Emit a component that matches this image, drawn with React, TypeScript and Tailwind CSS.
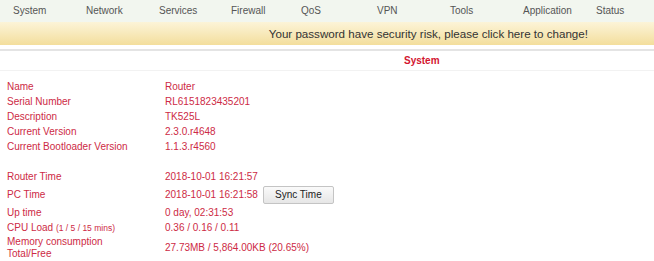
import React from "react";

const nav = [
  { t: "System", w: 73 },
  { t: "Network", w: 73 },
  { t: "Services", w: 72 },
  { t: "Firewall", w: 70 },
  { t: "QoS", w: 76 },
  { t: "VPN", w: 73 },
  { t: "Tools", w: 73 },
  { t: "Application", w: 73 },
  { t: "Status", w: 50 },
];

const group1 = [
  ["Name", "Router"],
  ["Serial Number", "RL6151823435201"],
  ["Description", "TK525L"],
  ["Current Version", "2.3.0.r4648"],
  ["Current Bootloader Version", "1.1.3.r4560"],
];

export default function App() {
  return (
    <div
      className="w-[654px] h-[261px] overflow-hidden bg-white text-[10px] leading-none"
      style={{ fontFamily: '"Liberation Sans", Arial, sans-serif' }}
    >
      <div className="h-[22px] bg-[#f2f6ef] flex items-center pl-[13px] text-[#555]">
        {nav.map((n) => (
          <div key={n.t} className="shrink-0" style={{ width: n.w }}>
            {n.t}
          </div>
        ))}
      </div>
      <div className="h-[23px] bg-gradient-to-b from-[#fcf4d8] to-[#f3de9c] flex items-center justify-end pr-[66px] text-[11.6px] text-[#333]">
        Your password have security risk, please click here to change!
      </div>
      <div className="h-[4px]" />
      <div className="h-[2px] bg-[#e4e4e4]" />
      <div className="h-[20px] flex items-center pl-[404px] font-bold text-[#d3152f] border-b border-[#f2f2f2]">
        System
      </div>
      <div className="h-[8px]" />
      <div className="text-[#cd2a45]">
        {group1.map(([a, b]) => (
          <div key={a} className="h-[15px] flex items-center">
            <div className="w-[165px] pl-[7px] shrink-0">{a}</div>
            <div>{b}</div>
          </div>
        ))}
        <div className="h-[15px]" />
        <div className="h-[15px] flex items-center">
          <div className="w-[165px] pl-[7px] shrink-0">Router Time</div>
          <div>2018-10-01 16:21:57</div>
        </div>
        <div className="h-[21px] flex items-center">
          <div className="w-[165px] pl-[7px] shrink-0">PC Time</div>
          <div>2018-10-01 16:21:58</div>
          <button className="ml-[5px] w-[71px] h-[18px] border border-[#c4c4c4] rounded-[2px] bg-gradient-to-b from-[#fafafa] to-[#e6e6e6] text-[#222] text-[10px] flex items-center justify-center">
            Sync Time
          </button>
        </div>
        <div className="h-[15px] flex items-center">
          <div className="w-[165px] pl-[7px] shrink-0">Up time</div>
          <div>0 day, 02:31:53</div>
        </div>
        <div className="h-[15px] flex items-center">
          <div className="w-[165px] pl-[7px] shrink-0">
            CPU Load <span className="text-[8.5px]">(1 / 5 / 15 mins)</span>
          </div>
          <div>0.36 / 0.16 / 0.11</div>
        </div>
        <div className="h-[26px] flex items-center">
          <div className="w-[165px] pl-[7px] shrink-0 leading-[12px]">
            Memory consumption
            <br />
            Total/Free
          </div>
          <div>27.73MB / 5,864.00KB (20.65%)</div>
        </div>
      </div>
    </div>
  );
}
